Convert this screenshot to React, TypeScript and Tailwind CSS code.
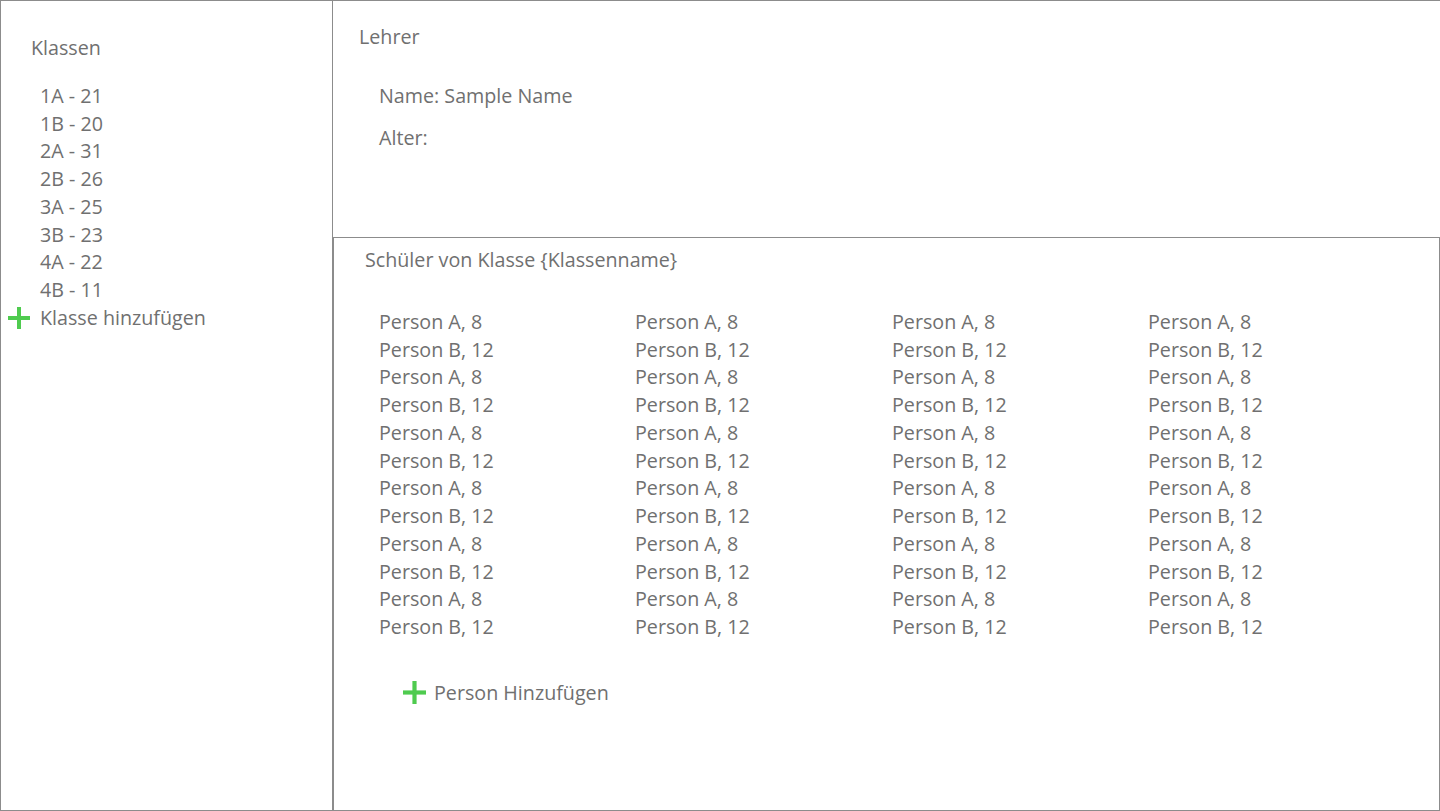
import React from "react";

function Plus({ className }: { className?: string }) {
  return (
    <svg viewBox="0 0 22 22" className={className} aria-hidden>
      <rect x="9" y="0" width="4" height="22" fill="#4fcb4f" />
      <rect x="0" y="9" width="22" height="4" fill="#4fcb4f" />
    </svg>
  );
}

const klassen = ["1A - 21", "1B - 20", "2A - 31", "2B - 26", "3A - 25", "3B - 23", "4A - 22", "4B - 11"];

export default function App() {
  const rows = Array.from({ length: 12 }, (_, i) => (i % 2 === 0 ? "Person A, 8" : "Person B, 12"));
  return (
    <div
      className="w-[1440px] h-[811px] flex bg-white text-[#707070] text-[19.7px] leading-[27.75px] overflow-hidden"
      style={{ fontFamily: '"Open Sans", "Noto Sans", sans-serif' }}
    >
      <aside className="w-[333px] h-full border border-[#8c8c8c] shrink-0">
        <div className="pl-[30px] pt-[33px]">Klassen</div>
        <ul className="mt-[20px]">
          {klassen.map((k) => (
            <li key={k} className="pl-[39px]">{k}</li>
          ))}
          <li className="flex items-center pl-[7px] gap-[10px]">
            <Plus className="w-[22px] h-[22px]" />
            <span>Klasse hinzufügen</span>
          </li>
        </ul>
      </aside>
      <div className="flex-1 flex flex-col h-full">
        <section className="h-[237px] border-t border-[#8c8c8c] shrink-0">
          <div className="pl-[26px] pt-[22px]">Lehrer</div>
          <div className="pl-[46px] mt-[31px]">Name: Sample Name</div>
          <div className="pl-[46px] mt-[14px]">Alter:</div>
        </section>
        <section className="flex-1 border border-[#8c8c8c]">
          <div className="pl-[31px] pt-[8px]">Schüler von Klasse {"{Klassenname}"}</div>
          <div className="grid grid-cols-[256px_257px_256px_256px] pl-[45px] mt-[34px]">
            {[0, 1, 2, 3].map((c) => (
              <div key={c}>
                {rows.map((r, i) => (
                  <div key={i}>{r}</div>
                ))}
              </div>
            ))}
          </div>
          <div className="flex items-center pl-[69px] mt-[38px] gap-[8px]">
            <Plus className="w-[23px] h-[23px]" />
            <span>Person Hinzufügen</span>
          </div>
        </section>
      </div>
    </div>
  );
}
